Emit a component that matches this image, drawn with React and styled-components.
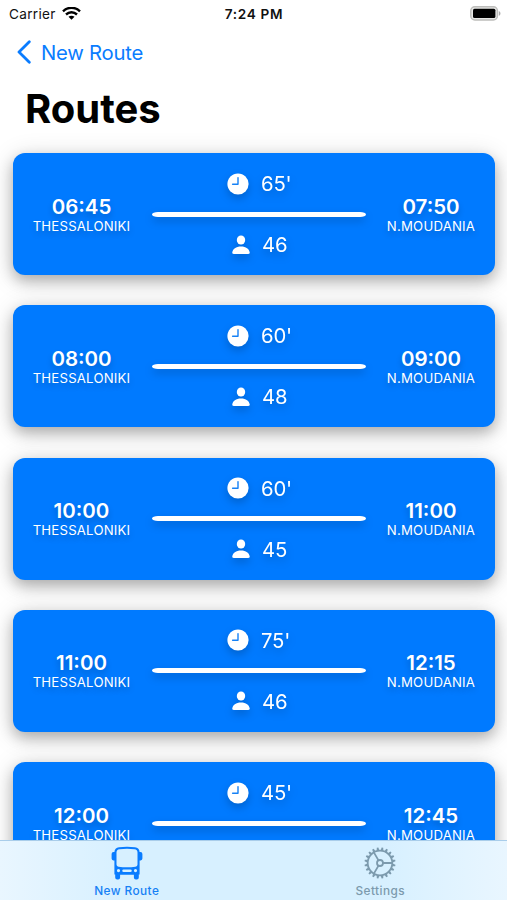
import React from 'react'
import styled, { createGlobalStyle } from 'styled-components'

const GlobalStyle = createGlobalStyle`
* {
  box-sizing: border-box;
}
body {
  margin: 0;
  background: #fff;
  font-family: Inter, "Liberation Sans", sans-serif;
  overflow: hidden;
}
`
const Screen = styled.div`
display: flex;
flex-direction: column;
width: 507px;
height: 900px;
overflow: hidden;
background: #fff;
`
const StatusBar = styled.div`
display: grid;
grid-template-columns: 1fr auto 1fr;
align-items: center;
flex: none;
height: 27px;
padding: 0 6px 0 9px;
font-size: 13.6px;
color: #111;
`
const Carrier = styled.div`
display: flex;
align-items: center;
gap: 6px;
letter-spacing: 0.3px;
`
const Clock = styled.div`
margin-right: 2px;
font-weight: 600;
letter-spacing: 0.65px;
`
const Battery = styled.svg`
justify-self: end;
`
const NavBar = styled.div`
display: flex;
align-items: center;
flex: none;
gap: 10px;
height: 50px;
padding-left: 17px;
font-size: 20.3px;
letter-spacing: -0.25px;
color: #0a7cff;
`
const Title = styled.h1`
flex: none;
height: 63px;
margin: 0;
padding-left: 25px;
line-height: 63px;
font-size: 40px;
font-weight: 700;
color: #000;
`
const RouteList = styled.div`
display: flex;
flex-direction: column;
flex: 1;
gap: 30.3px;
min-height: 0;
padding: 13px 12px 0 13px;
`
const Card = styled.div`
display: grid;
grid-template-columns: 97px 214px 88px;
justify-content: space-between;
align-items: center;
flex: none;
height: 122px;
padding: 0 20px;
border-radius: 12px;
background: #007aff;
box-shadow: 0 6px 14px rgba(0, 0, 0, 0.24), 0 4px 26px rgba(0, 0, 0, 0.16);
color: #fff;
`
const Stop = styled.div`
display: flex;
flex-direction: column;
align-items: center;
padding-top: 2px;
white-space: nowrap;
text-shadow: 0 4px 6px rgba(0, 0, 0, 0.2);
`
const StopTime = styled.div`
line-height: 21px;
font-size: 20.5px;
font-weight: 600;
`
const StopName = styled.div`
line-height: 18px;
font-size: 13.2px;
letter-spacing: 0.2px;
`
const Trip = styled.div`
display: flex;
flex-direction: column;
align-items: center;
filter: drop-shadow(0 4px 4px rgba(0, 0, 0, 0.2));
`
const TripRow = styled.div`
display: grid;
grid-template-columns: 26px 30px;
align-items: center;
gap: 8px;
height: 28px;
padding-left: ${props => props.$indent};
font-size: 20.3px;
letter-spacing: -0.2px;

svg {
  justify-self: ${props => props.$iconAlign};
}
`
const TripLine = styled.div`
width: 214px;
height: 5px;
margin: 14px 0 14px;
border-radius: 6px / 2.5px;
background: #fff;
`
const TabBar = styled.div`
display: flex;
position: relative;
flex: none;
height: 60px;
border-top: 1px solid #a9cdea;
background: linear-gradient(90deg, #e9f6ff 0, #d7f0ff 24%, #d7f0ff 76%, #e9f6ff 100%);
`
const Tab = styled.div`
display: flex;
flex-direction: column;
align-items: center;
flex: 1;
padding-top: 5px;
line-height: 16px;
font-size: 11.8px;
font-weight: 500;
letter-spacing: 0.45px;
color: ${props => props.$active ? '#1680f5' : '#7c9aad'};

svg {
  margin-bottom: 3px;
}
`

const routes = [
  { from: '06:45', to: '07:50', minutes: 65, seats: 46 },
  { from: '08:00', to: '09:00', minutes: 60, seats: 48 },
  { from: '10:00', to: '11:00', minutes: 60, seats: 45 },
  { from: '11:00', to: '12:15', minutes: 75, seats: 46 },
  { from: '12:00', to: '12:45', minutes: 45, seats: null },
]

const WifiIcon = () => (
  <svg width="19" height="14" viewBox="0 0 19 14" fill="none" stroke="#000" strokeWidth="2.4">
    <path d="M1 4.3C5.8-.4 13.2-.4 18 4.3" />
    <path d="M4 7.5C7.2 4.5 11.8 4.5 15 7.5" />
    <path d="M9.5 12.8L6.5 9.8C8.2 8.4 10.8 8.4 12.5 9.8Z" fill="#000" stroke="none" />
  </svg>
)

const BatteryIcon = () => (
  <Battery width="31" height="15" viewBox="0 0 31 15">
    <rect x="0.8" y="0.8" width="26.6" height="13.2" rx="4" fill="#e8e8e6" stroke="#bdbdbb" strokeWidth="1.5" />
    <rect x="3" y="2.7" width="22.4" height="9.4" rx="1.5" fill="#000" />
    <path d="M28.8 5C31 5.8 31 9 28.8 9.8Z" fill="#aaa" />
  </Battery>
)

const BackIcon = () => (
  <svg width="14" height="24" viewBox="0 0 14 24" fill="none" stroke="#0a7cff" strokeWidth="2.8" strokeLinecap="round" strokeLinejoin="round">
    <path d="M12.3 1.8L2 12L12.3 22.2" />
  </svg>
)

const ClockIcon = () => (
  <svg width="22" height="22" viewBox="0 0 22 22">
    <circle cx="11" cy="11" r="10.6" fill="#fff" />
    <path d="M11 4.6V11.2H5.6" fill="none" stroke="#1681f5" strokeWidth="1.4" strokeLinecap="round" strokeLinejoin="round" />
  </svg>
)

const PersonIcon = () => (
  <svg width="18" height="20" viewBox="0 0 18 20" fill="#fff">
    <ellipse cx="9" cy="5" rx="4.2" ry="4.6" />
    <path d="M1.8 19C.6 19 .1 18.3.3 17.3C.8 14 4 11.4 9 11.4S17.2 14 17.7 17.3C17.9 18.3 17.4 19 16.2 19Z" />
  </svg>
)

const BusIcon = () => (
  <svg width="32" height="34" viewBox="0 0 32 34" fill="#0a7cff">
    <path fillRule="evenodd" d="M8 1.2Q16 .2 24 1.2Q28.4 1.8 28.6 6V28.5H27.8V31.5Q27.8 33.4 25.8 33.4H24.8Q22.9 33.4 22.9 31.5V28.8H9.1V31.5Q9.1 33.4 7.2 33.4H6.2Q4.2 33.4 4.2 31.5V28.5H3.4V6Q3.6 1.8 8 1.2ZM8.5 3.2Q5.5 3.5 5.5 6.5V18.6Q5.5 20.6 7.5 20.8Q16 21.8 24.5 20.8Q26.5 20.6 26.5 18.6V6.5Q26.5 3.5 23.5 3.2Q16 2.5 8.5 3.2ZM7.5 23A1.6 1.6 0 1 0 7.5 26.2A1.6 1.6 0 1 0 7.5 23ZM24.5 23A1.6 1.6 0 1 0 24.5 26.2A1.6 1.6 0 1 0 24.5 23ZM12.5 23.5A1 1 0 0 0 12.5 26H19.5A1 1 0 0 0 19.5 23.5Z" />
    <path d="M4 6H2.5Q.6 6.2.6 8V12.5Q.6 14.2 2.3 14.4H4ZM28 6H29.5Q31.4 6.2 31.4 8V12.5Q31.4 14.2 29.7 14.4H28Z" />
  </svg>
)

const teeth = Array.from({ length: 20 }, (_, i) => i * 18 + 9)

const GearIcon = () => (
  <svg width="32" height="34" viewBox="-16 -17 32 34" fill="none" stroke="#7c9aad" strokeWidth="1.8">
    <circle r="12.3" />
    <circle r="3" />
    <path d="M3 0H12M-1.5 -2.6L-6 -10.4M-1.5 2.6L-6 10.4" />
    {teeth.map(angle => (
      <path key={angle} d="M12.5 -1.4L15.5 -.8V.8L12.5 1.4Z" transform={`rotate(${angle})`} fill="#7c9aad" stroke="none" />
    ))}
  </svg>
)

const RouteCard = ({ route }) => (
  <Card>
    <Stop>
      <StopTime>{route.from}</StopTime>
      <StopName>THESSALONIKI</StopName>
    </Stop>
    <Trip>
      <TripRow $iconAlign="start" $indent="1px">
        <ClockIcon />
        <span>{route.minutes}'</span>
      </TripRow>
      <TripLine />
      <TripRow $iconAlign="center" $indent="3px">
        {route.seats && <PersonIcon />}
        <span>{route.seats}</span>
      </TripRow>
    </Trip>
    <Stop>
      <StopTime>{route.to}</StopTime>
      <StopName>N.MOUDANIA</StopName>
    </Stop>
  </Card>
)

const App = () => (
  <Screen>
    <GlobalStyle />
    <StatusBar>
      <Carrier>Carrier <WifiIcon /></Carrier>
      <Clock>7:24 PM</Clock>
      <BatteryIcon />
    </StatusBar>
    <NavBar>
      <BackIcon />
      New Route
    </NavBar>
    <Title>Routes</Title>
    <RouteList>
      {routes.map(route => <RouteCard key={route.from} route={route} />)}
    </RouteList>
    <TabBar>
      <Tab $active>
        <BusIcon />
        New Route
      </Tab>
      <Tab>
        <GearIcon />
        Settings
      </Tab>
    </TabBar>
  </Screen>
)

export default App
